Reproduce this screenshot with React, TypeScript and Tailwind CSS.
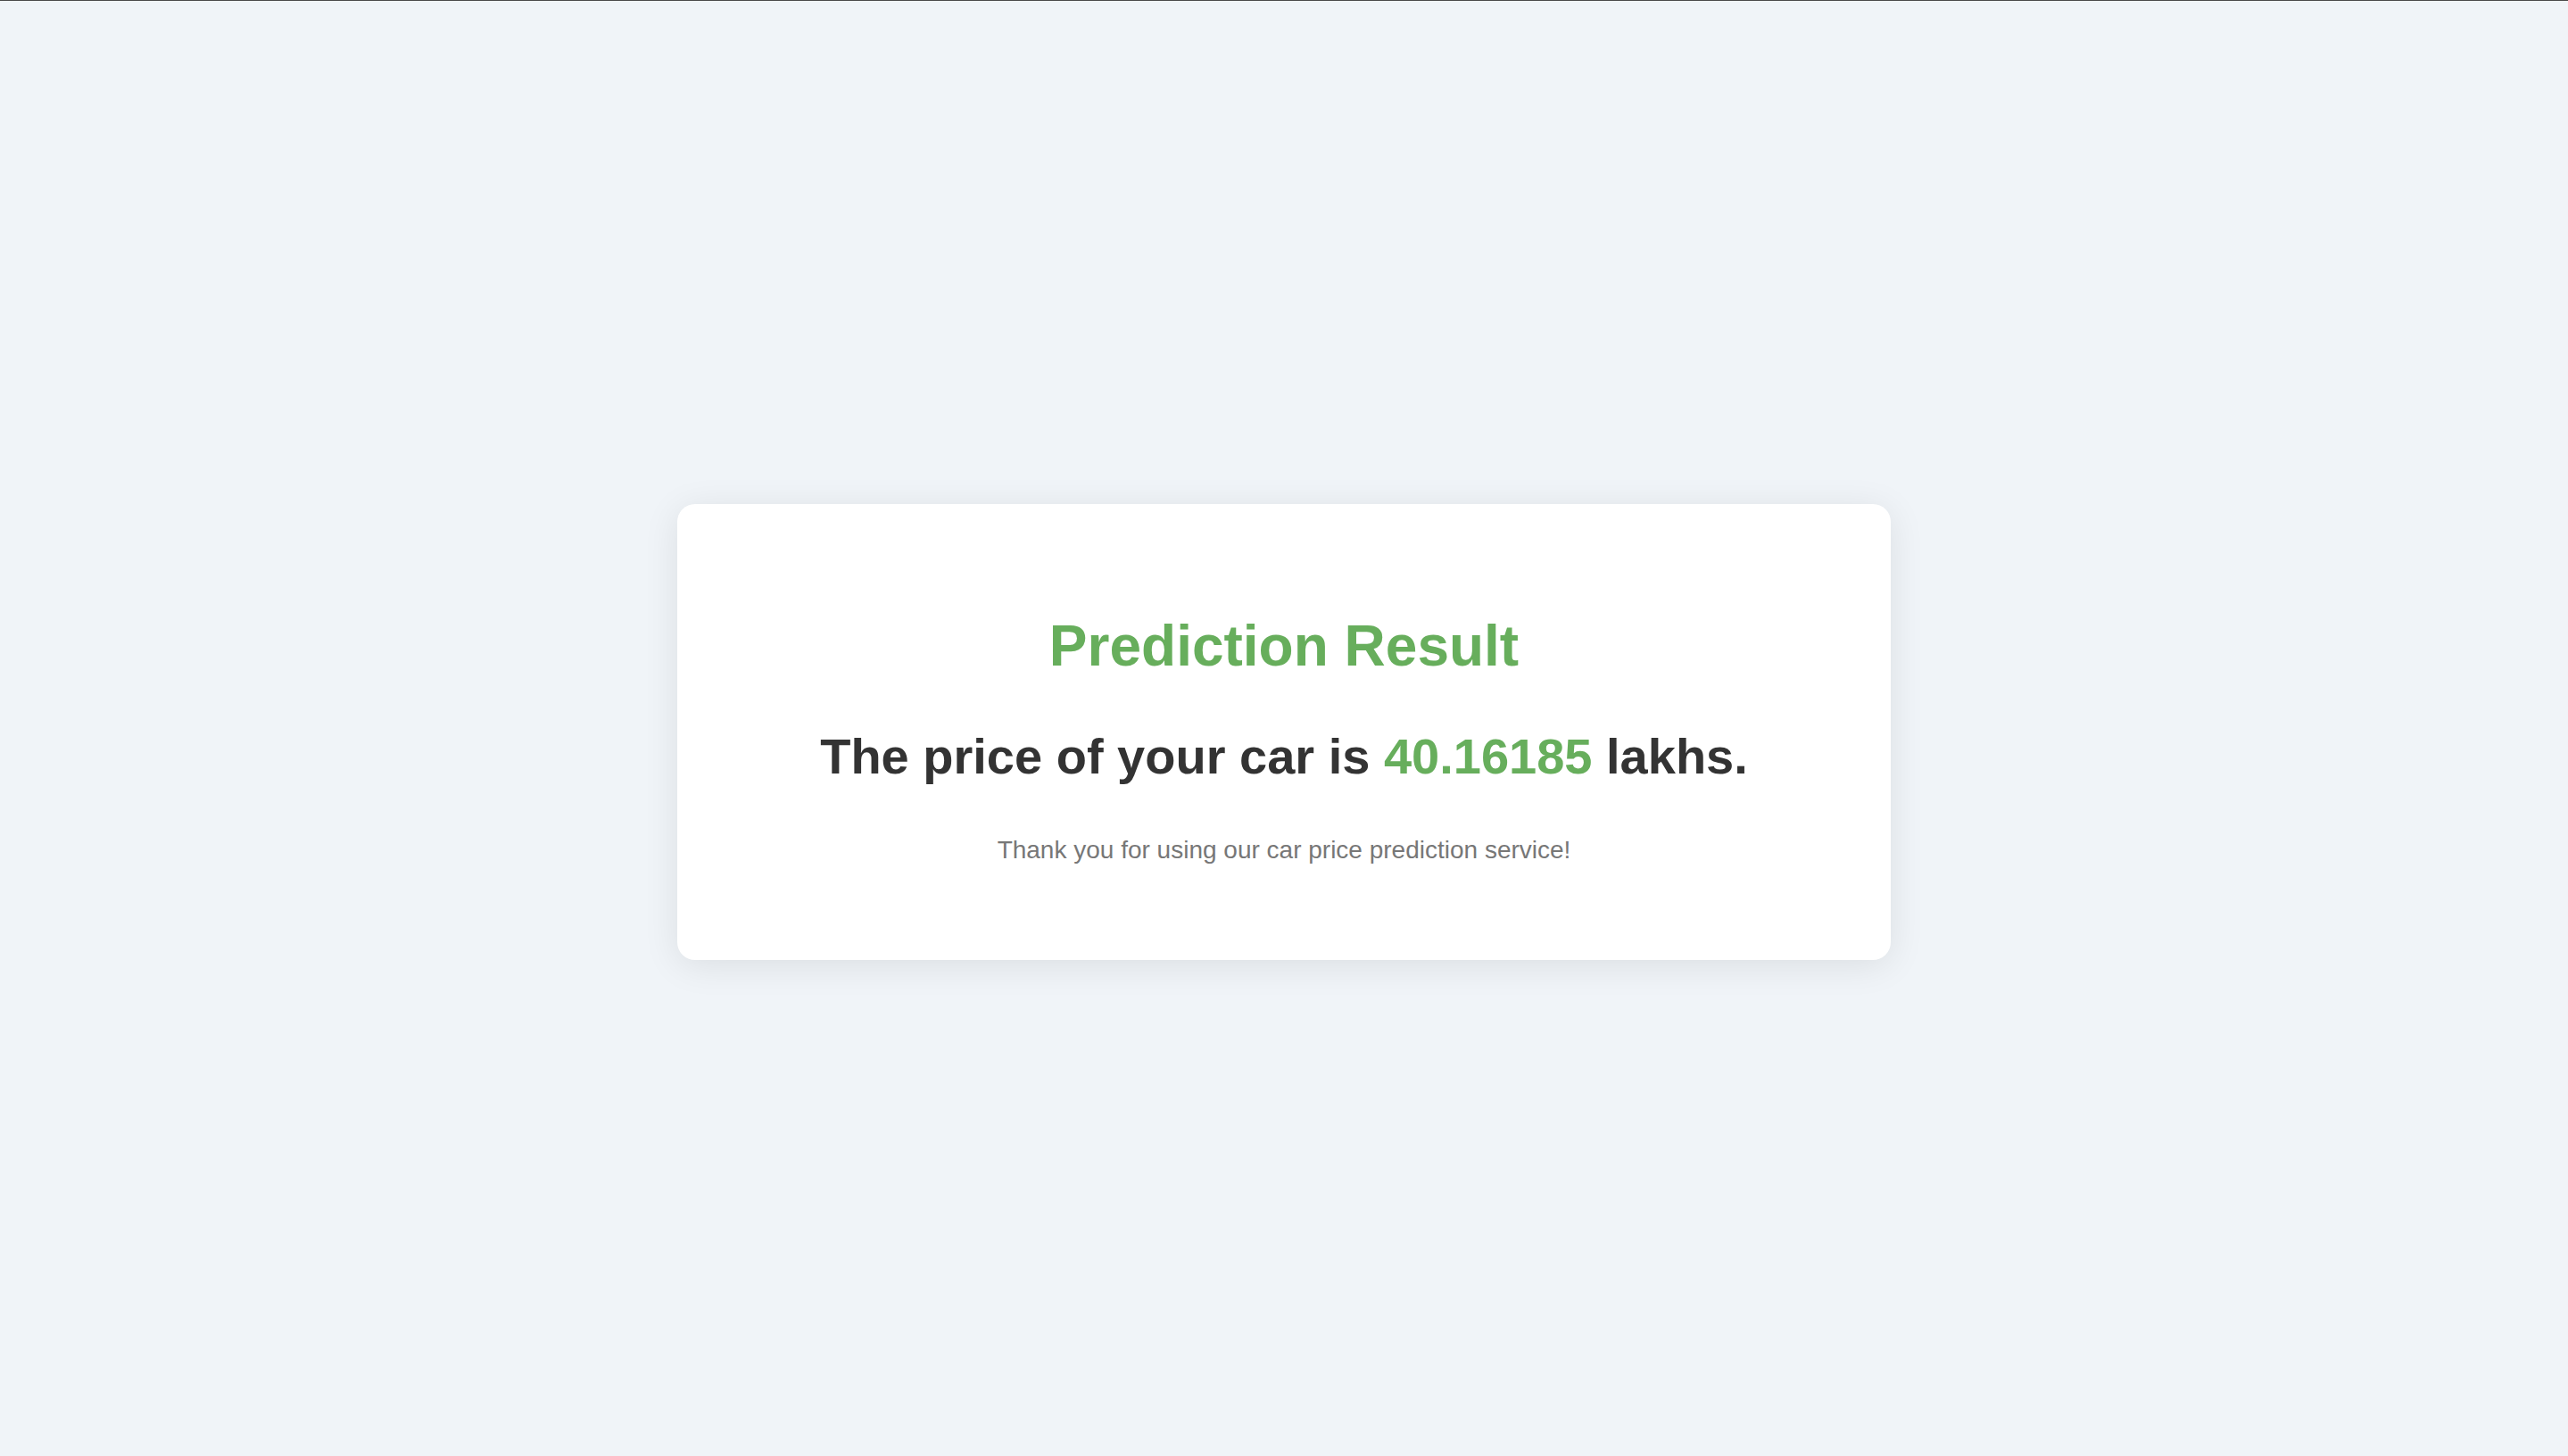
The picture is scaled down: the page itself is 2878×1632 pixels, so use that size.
import React from "react";

const App: React.FC = () => {
  const price = "40.16185";

  return (
    <div
      className="h-[1632px] w-full bg-[#f0f4f8] border-t border-[#4a4a4a] pt-[8px] flex items-center justify-center"
      style={{ fontFamily: '"Liberation Sans", Arial, Helvetica, sans-serif' }}
    >
      <div className="w-[1360px] bg-white rounded-[20px] shadow-[0_6px_40px_rgba(0,0,0,0.09)] px-[80px] pt-[123px] pb-[107px] text-center">
        <h1 className="text-[64px] leading-[1.15] font-bold text-[#67ae5c] mb-[54px]">
          Prediction Result
        </h1>
        <h2 className="text-[56px] leading-[1.15] font-bold text-[#333333] mb-[57px]">
          The price of your car is <span className="text-[#67ae5c]">{price}</span> lakhs.
        </h2>
        <p className="text-[28px] leading-[1.15] text-[#777777]">
          Thank you for using our car price prediction service!
        </p>
      </div>
    </div>
  );
};

export default App;
